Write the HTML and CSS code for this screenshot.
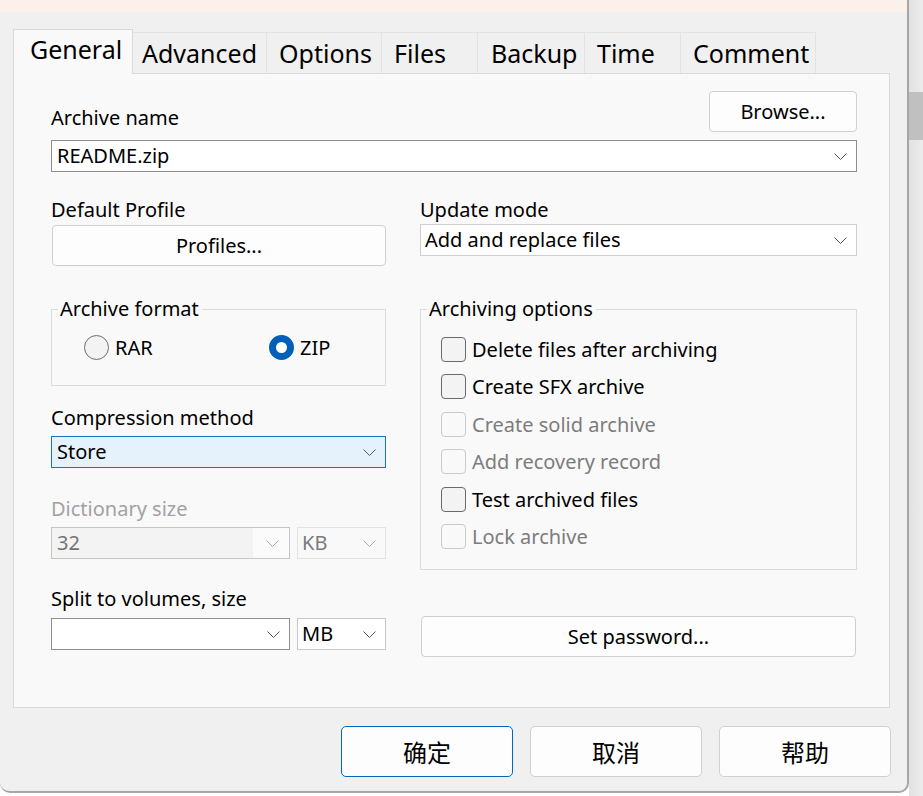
FILE: index.html
```html
<!DOCTYPE html>
<html lang="en">
<head>
<meta charset="utf-8">
<title>Archive name and parameters</title>
<link rel="stylesheet" href="styles.css">
</head>
<body>
<div class="screen">
  <div class="window">
    <div class="titlestrip"></div>
    <div class="dialog">
      <div class="tabs">
        <div class="tab tab-general active">General</div>
        <div class="tab tab-advanced">Advanced</div>
        <div class="tab tab-options">Options</div>
        <div class="tab tab-files">Files</div>
        <div class="tab tab-backup">Backup</div>
        <div class="tab tab-time">Time</div>
        <div class="tab tab-comment">Comment</div>
      </div>
      <div class="panel">
        <div class="name-row">
          <div class="label">Archive name</div>
          <div class="btn btn-browse">Browse...</div>
        </div>
        <div class="combo combo-name">
          <span class="combo-text">README.zip</span>
          <svg class="chev" width="13" height="7" viewBox="0 0 13 7"><polyline points="0.5,0.5 6.5,6.5 12.5,0.5" fill="none" stroke="#555" stroke-width="1"/></svg>
        </div>
        <div class="cols">
          <div class="col col-left">
            <div class="label">Default Profile</div>
            <div class="btn btn-profiles">Profiles...</div>
            <fieldset class="group group-format">
              <legend>Archive format</legend>
              <div class="radios">
                <div class="radio-item"><span class="radio"></span><span>RAR</span></div>
                <div class="radio-item"><span class="radio checked"></span><span>ZIP</span></div>
              </div>
            </fieldset>
            <div class="label label-compression">Compression method</div>
            <div class="combo combo-store">
              <span class="combo-text">Store</span>
              <svg class="chev" width="13" height="7" viewBox="0 0 13 7"><polyline points="0.5,0.5 6.5,6.5 12.5,0.5" fill="none" stroke="#555" stroke-width="1"/></svg>
            </div>
            <div class="label label-dict disabled-label">Dictionary size</div>
            <div class="combo-row row-dict">
              <div class="combo combo-dict">
                <span class="combo-text">32</span>
                <span class="arrow-area"><svg class="chev" width="13" height="7" viewBox="0 0 13 7"><polyline points="0.5,0.5 6.5,6.5 12.5,0.5" fill="none" stroke="#a8a8a8" stroke-width="1"/></svg></span>
              </div>
              <div class="combo combo-unit combo-kb">
                <span class="combo-text">KB</span>
                <svg class="chev" width="13" height="7" viewBox="0 0 13 7"><polyline points="0.5,0.5 6.5,6.5 12.5,0.5" fill="none" stroke="#b0b0b0" stroke-width="1"/></svg>
              </div>
            </div>
            <div class="label label-split">Split to volumes, size</div>
            <div class="combo-row row-split">
              <div class="combo combo-split">
                <span class="combo-text"></span>
                <svg class="chev" width="13" height="7" viewBox="0 0 13 7"><polyline points="0.5,0.5 6.5,6.5 12.5,0.5" fill="none" stroke="#555" stroke-width="1"/></svg>
              </div>
              <div class="combo combo-unit combo-mb">
                <span class="combo-text">MB</span>
                <svg class="chev" width="13" height="7" viewBox="0 0 13 7"><polyline points="0.5,0.5 6.5,6.5 12.5,0.5" fill="none" stroke="#555" stroke-width="1"/></svg>
              </div>
            </div>
          </div>
          <div class="col col-right">
            <div class="label">Update mode</div>
            <div class="combo combo-update">
              <span class="combo-text">Add and replace files</span>
              <svg class="chev" width="13" height="7" viewBox="0 0 13 7"><polyline points="0.5,0.5 6.5,6.5 12.5,0.5" fill="none" stroke="#555" stroke-width="1"/></svg>
            </div>
            <fieldset class="group group-options">
              <legend>Archiving options</legend>
              <div class="checks">
                <div class="check-item"><span class="check"></span><span>Delete files after archiving</span></div>
                <div class="check-item"><span class="check"></span><span>Create SFX archive</span></div>
                <div class="check-item disabled"><span class="check"></span><span>Create solid archive</span></div>
                <div class="check-item disabled"><span class="check"></span><span>Add recovery record</span></div>
                <div class="check-item"><span class="check"></span><span>Test archived files</span></div>
                <div class="check-item disabled"><span class="check"></span><span>Lock archive</span></div>
              </div>
            </fieldset>
            <div class="btn btn-password">Set password...</div>
          </div>
        </div>
      </div>
      <div class="buttons">
        <div class="btn btn-dlg btn-default">确定</div>
        <div class="btn btn-dlg">取消</div>
        <div class="btn btn-dlg">帮助</div>
      </div>
    </div>
  </div>
  <div class="scrollbar"><div class="thumb"></div></div>
</div>
</body>
</html>
```

FILE: styles.css
```css
* { box-sizing: border-box; }

html, body {
  margin: 0;
  padding: 0;
  background: #ffffff;
}

body {
  font-family: "Noto Sans", "Noto Sans CJK SC", sans-serif;
  font-size: 20px;
  color: #000;
}

.screen {
  display: flex;
  width: 923px;
  height: 796px;
  overflow: hidden;
}

.window {
  width: 909px;
  height: 793px;
  flex: none;
  display: flex;
  flex-direction: column;
  background: #f0f0f0;
  border-right: 2px solid #a6a6a6;
  border-bottom: 2px solid #a6a6a6;
  border-radius: 0 0 10px 10px;
  overflow: hidden;
}

.titlestrip {
  height: 12px;
  flex: none;
  background: #fbf1ea;
}

.dialog {
  flex: 1;
  padding: 17px 0 0 13px;
}

/* tabs */
.tabs {
  display: flex;
  align-items: flex-end;
  height: 44px;
}

.tab {
  height: 41px;
  padding: 2px 0 0 12px;
  font-size: 25px;
  line-height: 37px;
  white-space: nowrap;
  background: #f0f0f0;
  border-top: 1px solid #e3e3e3;
  border-right: 1px solid #e3e3e3;
}

.tab.active {
  position: relative;
  z-index: 1;
  height: 45px;
  margin-bottom: -1px;
  padding: 1px 0 0 16px;
  background: #f9f9f9;
  border: 1px solid #d9d9d9;
  border-bottom: none;
}

.tab-general { width: 120px; }
.tab-advanced { width: 134px; padding-left: 9px; }
.tab-options { width: 115px; }
.tab-files { width: 96px; }
.tab-backup { width: 107px; padding-left: 13px; }
.tab-time { width: 96px; }
.tab-comment { width: 135px; }

/* panel */
.panel {
  width: 877px;
  height: 635px;
  background: #f9f9f9;
  border: 1px solid #dadada;
  padding: 17px 32px 0 37px;
}

.label {
  line-height: 28px;
  height: 28px;
  white-space: nowrap;
}

.disabled-label { color: #a2a2a2; }

.name-row {
  display: flex;
  justify-content: space-between;
  align-items: flex-end;
}

.btn {
  display: flex;
  align-items: center;
  justify-content: center;
  background: #fdfdfd;
  border: 1px solid #d0d0d0;
  border-radius: 4px;
  white-space: nowrap;
}

.btn-browse {
  width: 148px;
  height: 41px;
}

.combo {
  display: flex;
  align-items: center;
  height: 32px;
  background: #fff;
  border: 1px solid #8e8e8e;
  padding: 0 9px 0 5px;
  line-height: 30px;
}

.combo-text {
  flex: 1;
  white-space: nowrap;
}

.chev { flex: none; display: block; }

.combo-name { margin-top: 8px; }

.cols {
  display: flex;
  gap: 34px;
  margin-top: 24px;
}

.col {
  display: flex;
  flex-direction: column;
}

.col-left { width: 335px; }
.col-right { width: 437px; }

.btn-profiles {
  width: 334px;
  height: 41px;
  margin: 1px 0 0 1px;
}

.group {
  margin: 0;
  border: 1px solid #dcdcdc;
  padding: 0 0 0 6px;
  min-width: 0;
}

.group legend {
  padding: 0 3px 0 2px;
  line-height: 28px;
  height: 28px;
}

.group-format { margin-top: 29px; }

.radios {
  display: grid;
  grid-template-columns: 185px auto;
  padding: 10px 0 24px 26px;
}

.radio-item {
  display: flex;
  align-items: center;
  gap: 6px;
  height: 28px;
}

.radio {
  width: 25px;
  height: 25px;
  border-radius: 50%;
  border: 1px solid #6e6e6e;
  background: #f3f3f3;
  flex: none;
}

.radio.checked {
  border: 7px solid #005fb8;
  background: #fff;
}

.label-compression { margin-top: 18px; }

.combo-store {
  margin-top: 4px;
  background: #e5f1fb;
  border-color: #1a73c8;
}

.label-dict { margin-top: 27px; }

.combo-row {
  display: flex;
  gap: 7px;
}

.row-dict { margin-top: 4px; }

.combo-dict, .combo-split { width: 239px; }
.combo-unit { width: 89px; padding-left: 4px; }

.combo-dict {
  background: #f3f3f3;
  border-color: #c6c6c6;
  color: #737373;
  padding-right: 0;
}

.arrow-area {
  display: flex;
  align-items: center;
  height: 100%;
  width: 36px;
  background: #fbfbfb;
  padding-left: 13px;
}

.combo-kb {
  background: #f9f9f9;
  border-color: #e2e2e2;
  color: #7a7a7a;
}

.label-split { margin-top: 26px; }
.row-split { margin-top: 5px; }

.combo-mb { border-color: #c9c9c9; }

.combo-update {
  border-color: #cfcfcf;
  padding-left: 4px;
}

.group-options { margin-top: 39px; }

.checks {
  display: flex;
  flex-direction: column;
  gap: 9.5px;
  padding: 12px 0 18px 14px;
}

.check-item {
  display: flex;
  align-items: center;
  gap: 6px;
  height: 28px;
  white-space: nowrap;
}

.check {
  width: 25px;
  height: 25px;
  border: 1px solid #6a6a6a;
  border-radius: 4px;
  background: #f3f3f3;
  flex: none;
}

.check-item.disabled { color: #7c7c7c; }
.check-item.disabled .check {
  border-color: #cacaca;
  background: transparent;
}

.btn-password {
  margin: 46px 1px 0 1px;
  height: 41px;
}

/* bottom buttons */
.buttons {
  display: flex;
  justify-content: flex-end;
  gap: 17px;
  padding-right: 16px;
  margin-top: 18px;
}

.btn-dlg {
  width: 172px;
  height: 51px;
  font-size: 24px;
  background: #fdfdfd;
  border-radius: 5px;
}

.btn-default {
  border-color: #0067c0;
}

/* scrollbar */
.scrollbar {
  width: 14px;
  flex: none;
  height: 796px;
  background: linear-gradient(to right, #e2e2e2, #ececec);
  padding-top: 92px;
}

.thumb {
  height: 48px;
  background: #c0c0c0;
}
```
